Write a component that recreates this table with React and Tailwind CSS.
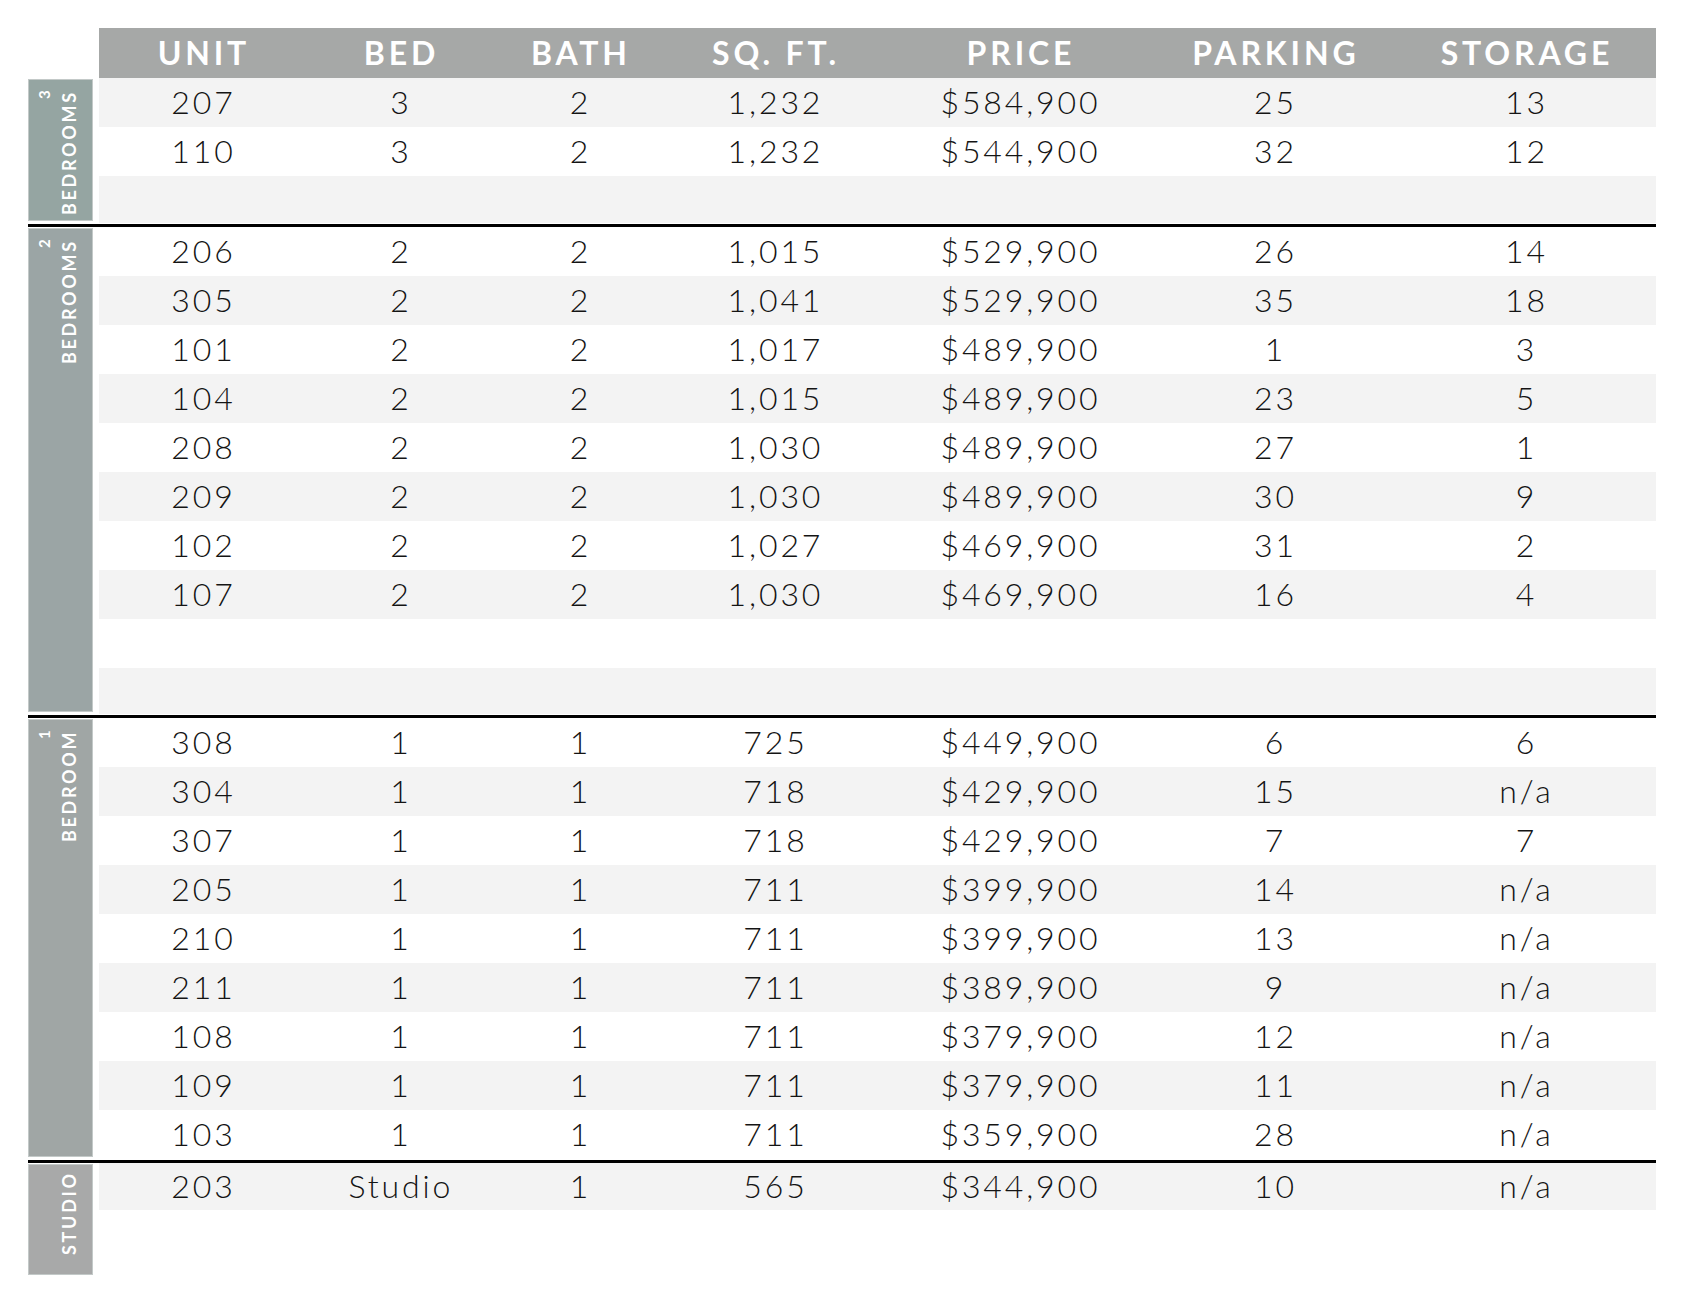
const cols = "grid grid-cols-[206px_189px_170px_220px_270px_240px_262px]";

const groups = [
  {
    num: "3",
    name: "BEDROOMS",
    color: "bg-[#95a5a2]",
    rows: [
      ["207", "3", "2", "1,232", "$584,900", "25", "13"],
      ["110", "3", "2", "1,232", "$544,900", "32", "12"],
      { empty: true, h: "h-[47px]" },
    ],
  },
  {
    num: "2",
    name: "BEDROOMS",
    color: "bg-[#9ba5a5]",
    rows: [
      ["206", "2", "2", "1,015", "$529,900", "26", "14"],
      ["305", "2", "2", "1,041", "$529,900", "35", "18"],
      ["101", "2", "2", "1,017", "$489,900", "1", "3"],
      ["104", "2", "2", "1,015", "$489,900", "23", "5"],
      ["208", "2", "2", "1,030", "$489,900", "27", "1"],
      ["209", "2", "2", "1,030", "$489,900", "30", "9"],
      ["102", "2", "2", "1,027", "$469,900", "31", "2"],
      ["107", "2", "2", "1,030", "$469,900", "16", "4"],
      { empty: true, h: "h-[49px]" },
      { empty: true, h: "h-[46px]" },
    ],
  },
  {
    num: "1",
    name: "BEDROOM",
    color: "bg-[#a0a6a5]",
    rows: [
      ["308", "1", "1", "725", "$449,900", "6", "6"],
      ["304", "1", "1", "718", "$429,900", "15", "n/a"],
      ["307", "1", "1", "718", "$429,900", "7", "7"],
      ["205", "1", "1", "711", "$399,900", "14", "n/a"],
      ["210", "1", "1", "711", "$399,900", "13", "n/a"],
      ["211", "1", "1", "711", "$389,900", "9", "n/a"],
      ["108", "1", "1", "711", "$379,900", "12", "n/a"],
      ["109", "1", "1", "711", "$379,900", "11", "n/a"],
      ["103", "1", "1", "711", "$359,900", "28", "n/a"],
    ],
  },
  {
    num: "\u00a0",
    name: "STUDIO",
    color: "bg-[#a8a9a9]",
    tall: true,
    rows: [["203", "Studio", "1", "565", "$344,900", "10", "n/a"]],
  },
];

const headers = ["UNIT", "BED", "BATH", "SQ. FT.", "PRICE", "PARKING", "STORAGE"];

const SideLabel = ({ num, name, color, tall }) => (
  <div
    className={`w-[65px] mr-[6px] flex pl-[6px] border border-[#c3c9c8] ${color} ${
      tall ? "h-[111px] mt-[1px]" : "self-stretch mt-[1px] mb-[2px]"
    }`}
  >
    <div
      className={`[writing-mode:vertical-rl] rotate-180 text-right text-white ${
        tall ? "pb-[6px]" : "pb-[10px]"
      }`}
    >
      <div className="text-[15px] leading-[19px] font-bold">{num}</div>
      <div className="text-[18px] leading-[31px] tracking-[0.15em] font-bold">
        {name}
      </div>
    </div>
  </div>
);

export default function App() {
  let idx = 0;
  return (
    <div className="min-h-screen bg-white pt-[28px] pl-[28px] font-['Lato',sans-serif] text-[#141414]">
      <div className="w-[1628px]">
        <div className="flex">
          <div className="w-[71px]" />
          <div className={`${cols} h-[50px] bg-[#a6a8a7] items-center`}>
            {headers.map((h) => (
              <div
                key={h}
                className="text-center text-white text-[32px] font-bold tracking-[0.12em] pl-[0.12em] leading-none"
              >
                {h}
              </div>
            ))}
          </div>
        </div>

        {groups.map((g, gi) => (
          <div key={gi}>
            {gi > 0 && <div className="h-[3px] bg-black mt-[1px]" />}
            <div className="flex items-start">
              <SideLabel {...g} />
              <div className="w-[1557px]">
                {g.rows.map((r, ri) => {
                  const stripe = idx++ % 2 === 0 ? "bg-[#f3f3f3]" : "bg-white";
                  if (!Array.isArray(r)) {
                    return <div key={ri} className={`${r.h} ${stripe}`} />;
                  }
                  return (
                    <div
                      key={ri}
                      className={`${cols} ${stripe} ${g.tall ? "h-[47px]" : "h-[49px]"} items-center`}
                    >
                      {r.map((c, ci) => (
                        <div
                          key={ci}
                          className="text-center text-[32px] font-light tracking-[0.09em] pl-[0.09em] leading-none pb-[2px]"
                        >
                          {c}
                        </div>
                      ))}
                    </div>
                  );
                })}
              </div>
            </div>
          </div>
        ))}
      </div>
    </div>
  );
}
